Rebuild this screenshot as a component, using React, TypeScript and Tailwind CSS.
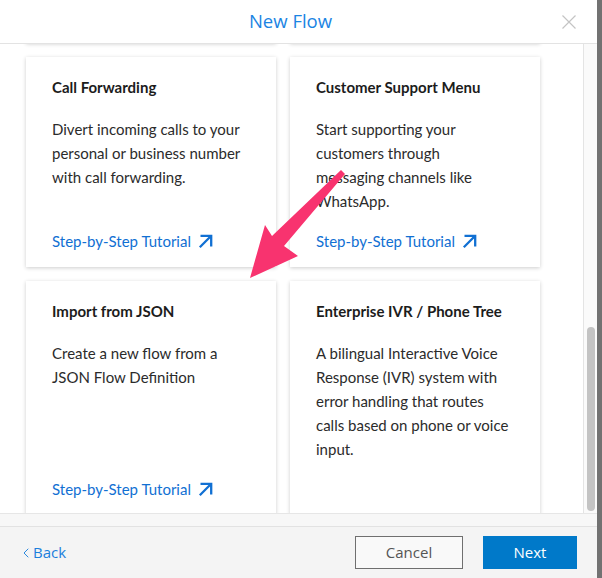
import { useLayoutEffect, useRef } from "react";
import { ChevronLeft } from "lucide-react";

// ─── Templates ───────────────────────────────────────────────────────────────

type Template = { title: string; body: string; tutorial: boolean };

const ROWS: Template[][] = [
  [
    {
      title: "Call Forwarding",
      body: "Divert incoming calls to your personal or business number with call forwarding.",
      tutorial: true,
    },
    {
      title: "Customer Support Menu",
      body: "Start supporting your customers through messaging channels like WhatsApp.",
      tutorial: true,
    },
  ],
  [
    { title: "Import from JSON", body: "Create a new flow from a JSON Flow Definition", tutorial: true },
    {
      title: "Enterprise IVR / Phone Tree",
      body: "A bilingual Interactive Voice Response (IVR) system with error handling that routes calls based on phone or voice input.",
      tutorial: false,
    },
  ],
];

const CARD_FONT = { fontFamily: "Lato, 'Open Sans', sans-serif" };
const UI_FONT = { fontFamily: "'Open Sans', 'Liberation Sans', sans-serif" };

const CARD = "flex flex-col bg-white shadow-[0_1px_4px_rgba(0,0,0,0.2)]";

function TutorialIcon() {
  return (
    <svg width="15" height="15" viewBox="0 0 15 15" fill="none">
      <path d="M2.5 1.8h10.7v10.7M13.2 1.8 1.8 13.2" stroke="#1170d3" strokeWidth="2.3" />
    </svg>
  );
}

function TemplateCard({ t, tall }: { t: Template; tall: boolean }) {
  return (
    <div
      className={`${CARD} ${tall ? "min-h-[234px]" : "min-h-[210px]"} pt-[18px] pr-[30px] pb-[14px] pl-[26px]`}
      style={CARD_FONT}
    >
      <h3 className="text-[15px] leading-6 font-bold text-[#1c1c1c]">{t.title}</h3>
      <p className="mt-[18px] mb-4 text-[15px] leading-6 text-[#2b2b2b]">{t.body}</p>
      {t.tutorial && (
        <a className="mt-auto flex items-center gap-[7px] text-[15px] leading-6 text-[#1170d3]">
          Step-by-Step Tutorial
          <TutorialIcon />
        </a>
      )}
    </div>
  );
}

// ─── Modal ───────────────────────────────────────────────────────────────────

export default function App() {
  const scrollRef = useRef<HTMLDivElement>(null);

  // the row above sits scrolled out of view, just under the header line
  useLayoutEffect(() => {
    if (scrollRef.current) scrollRef.current.scrollTop = 26 + 210 + 14 - 13;
  }, []);

  return (
    <div className="flex h-[578px] w-[602px] bg-[#727272]">
      <div className="flex h-full w-[597px] flex-col bg-white">
        {/* Header */}
        <div className="flex h-[44px] shrink-0 items-center border-b border-[#e3e3e3] pl-[20px]">
          <h1
            className="flex-1 text-center text-[18.5px] leading-none text-[#1b84e3]"
            style={UI_FONT}
          >
            New Flow
          </h1>
          <button className="mr-[20px] flex h-[16px] w-[16px] items-center justify-center">
            <svg width="16" height="16" viewBox="0 0 16 16" fill="none">
              <path d="M1.5 1.5 14.5 14.5M14.5 1.5 1.5 14.5" stroke="#c4c4c4" strokeWidth="1.2" />
            </svg>
          </button>
        </div>

        {/* Body */}
        <div className="flex h-[470px] shrink-0 border-b border-[#e6e6e6]">
          <div ref={scrollRef} className="h-full w-[583px] overflow-hidden">
            <div className="flex flex-col gap-[14px] pt-[26px] pb-[26px] pl-[26px]">
              <div className="grid w-[514px] grid-cols-2 gap-[14px]">
                <div className={`${CARD} min-h-[210px]`} />
                <div className={`${CARD} min-h-[210px]`} />
              </div>
              {ROWS.map((row, i) => (
                <div key={i} className="grid w-[514px] grid-cols-2 gap-[14px]">
                  {row.map((t) => (
                    <TemplateCard key={t.title} t={t} tall={i === 1} />
                  ))}
                </div>
              ))}
            </div>
          </div>
          {/* Scrollbar */}
          <div className="flex h-full flex-1 flex-col items-center border-l border-[#e4e4e4] bg-[#fafafa]">
            <div className="mt-[283px] h-[184px] w-[8px] rounded-full bg-[#c3c3c3]" />
          </div>
        </div>

        <div className="h-[13px] shrink-0 border-b border-[#e2e2e2] bg-[#f7f7f7]" />

        {/* Footer */}
        <div
          className="flex flex-1 items-center bg-[#f4f4f4] pr-[20px] pl-[18px]"
          style={UI_FONT}
        >
          <button className="flex items-center text-[15px] text-[#1b7fdc]">
            <ChevronLeft size={16} strokeWidth={1.4} className="-mr-[1px]" />
            Back
          </button>
          <div className="ml-auto flex items-center gap-[20px]">
            <button className="h-[33px] w-[108px] border border-[#6f6f6f] bg-[#f9f9f9] text-[15px] text-[#555]">
              Cancel
            </button>
            <button className="h-[33px] w-[94px] bg-[#0079c9] text-[15px] text-white">
              Next
            </button>
          </div>
        </div>
      </div>

      {/* Annotation arrow */}
      <svg
        className="pointer-events-none absolute top-0 left-0"
        width="602"
        height="578"
        viewBox="0 0 602 578"
      >
        <polygon
          points="250,278 298,256 284,246 345,174 341,170 272,236 265,225"
          fill="#f8336f"
        />
      </svg>
    </div>
  );
}
